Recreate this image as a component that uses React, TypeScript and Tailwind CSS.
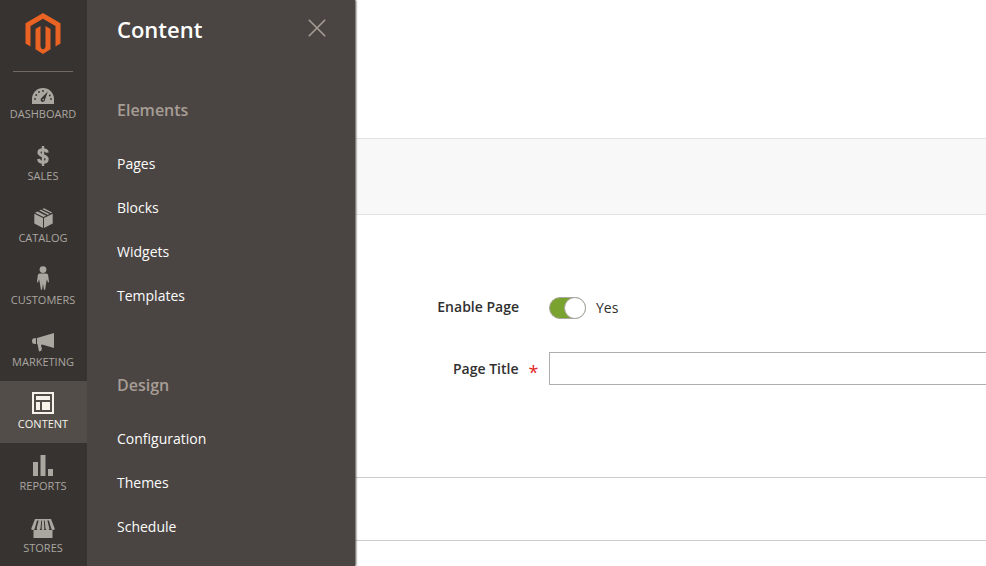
import { useState, type ReactNode } from "react";

type NavItem = { label: string; icon: ReactNode };

const navItems: NavItem[] = [
  {
    label: "Dashboard",
    icon: (
      <svg width="22" height="16" viewBox="0 0 22 16" fill="currentColor">
        <path d="M0 16v-5a11 11 0 0 1 22 0v5z" />
        <g fill="#373330">
          <circle cx="3" cy="11" r="0.9" />
          <circle cx="4.2" cy="7" r="0.9" />
          <circle cx="7" cy="4" r="0.9" />
          <circle cx="11" cy="3" r="0.9" />
          <circle cx="17.8" cy="7.5" r="0.9" />
          <circle cx="19" cy="11" r="0.9" />
          <path d="M15.8 3.6 13 11.6a2.2 2.2 0 1 1-3.3-1.8z" />
        </g>
        <circle cx="11.2" cy="11.6" r="0.8" />
      </svg>
    ),
  },
  {
    label: "Sales",
    icon: (
      <svg width="12" height="20" viewBox="0 0 12 20" fill="none" stroke="currentColor">
        <path d="M10.300 6.600C10 4.600 8.400 3.700 6 3.700 3.500 3.700 1.900 4.800 1.900 6.500c0 4.500 8.300 2 8.300 6.700 0 2-1.700 3.100-4.200 3.100-2.700 0-4.200-1-4.500-3.300" strokeWidth="3" />
        <path d="M6 0v20" strokeWidth="2.400" />
      </svg>
    ),
  },
  {
    label: "Catalog",
    icon: (
      <svg width="19" height="20" viewBox="0 0 19 20" fill="currentColor">
        <path d="M.3 5.800 9 10v10L.3 15.500z" />
        <path d="M10 10l8.700-4.200v9.700L10 20z" />
        <path d="M1 4.700 3.600 3.400 12.200 7.700 9.500 9z" />
        <path d="M5.300 2.500 7 1.700 15.600 6 13.900 6.900z" />
        <path d="M8.300 1 10 .2 18.200 4.600 16.900 5.300z" />
      </svg>
    ),
  },
  {
    label: "Customers",
    icon: (
      <svg width="12" height="24" viewBox="0 0 12 24" fill="currentColor">
        <circle cx="6" cy="3.6" r="3.4" />
        <path d="M3 7.6h6c1.4 0 2 .8 2.2 2l.8 6c.1 1-.9 1.3-1.2.4L9.9 13.2 9 18l-.8 5.3c-.2.9-1.2.9-1.3 0L6 17.8l-.9 5.5c-.1.9-1.1.9-1.3 0L3 18l-.9-4.8-.9 2.8c-.3.9-1.3.6-1.2-.4l.8-6c.2-1.2.8-2 2.2-2z" />
      </svg>
    ),
  },
  {
    label: "Marketing",
    icon: (
      <svg width="22" height="19" viewBox="0 0 22 19" fill="currentColor">
        <path d="M22 0v15L11 11.8 5 11V5z" />
        <path d="M4 5v6l-2.8-.2Q0 10.300 0 8t1.200-2.600z" />
        <path d="M5.500 11h4l-.5 3 1 .8-.7 3-2.300.600z" />
      </svg>
    ),
  },
  {
    label: "Content",
    icon: (
      <svg width="22" height="22" viewBox="0 0 22 22" fill="currentColor">
        <path fillRule="evenodd" d="M0 0h22v22H0zM2 2v18h18V2z" />
        <path d="M4 4h14v4H4zM4 10h4v8H4zM10 10h8v8h-8z" />
      </svg>
    ),
  },
  {
    label: "Reports",
    icon: (
      <svg width="20" height="21" viewBox="0 0 20 21" fill="currentColor">
        <path d="M0 7h5v14H0zM7.500 0h5v21h-5zM15 14h5v7h-5z" />
      </svg>
    ),
  },
  {
    label: "Stores",
    icon: (
      <svg width="24" height="19" viewBox="0 0 24 19" fill="currentColor">
        <path d="M4 0h16v1.500H4zM2.500 11h19v8h-19z" />
        <path d="M4 0h2.500L3.800 9.500Q3.400 11 1.800 11 0 11 .3 9.500zM8 0h2.400l-.9 9.500Q9.300 11.200 7.400 11.200T5.600 9.500zM13.600 0H16l2.400 9.500q.1 1.700-1.800 1.700t-2.100-1.700zM17.500 0H20l3.700 9.500q.3 1.500-1.500 1.500-1.600 0-2-1.500zM11.200 0h1.600l.6 9.500q0 1.700-1.400 1.700t-1.400-1.700z" />
      </svg>
    ),
  },
];

const sections = [
  { title: "Elements", links: ["Pages", "Blocks", "Widgets", "Templates"] },
  { title: "Design", links: ["Configuration", "Themes", "Schedule"] },
];

function SideNav() {
  return (
    <nav aria-label="Main" className="w-[87px] shrink-0 bg-[#373330]">
      <a href="#home" aria-label="Magento admin" className="mr-[14px] ml-[13px] flex h-[72px] justify-center border-b border-[#736963] pt-[13px]">
        <svg width="36" height="41" viewBox="0 0 35 41" fill="#eb6323">
          <path d="M17.500 0 35 10.200v20.300l-5 2.900V13L17.500 5.800 5 13v20.400l-5-2.900V10.200z" />
          <path d="M15 13v20.500q0 2 2.500 3 2.500-1 2.500-3V13l5 2.900v20.400L17.500 41 10 36.300V15.900z" />
        </svg>
      </a>
      <ul className="-mt-px">
        {navItems.map(({ label, icon }) => {
          const active = label === "Content";
          return (
            <li key={label}>
              <a
                href={`#${label}`}
                aria-current={active ? "page" : undefined}
                className={`flex h-[62px] flex-col items-center pr-px text-[11px] leading-4 uppercase ${
                  active ? "bg-[#524d49] text-[#f7f3eb]" : "text-[#aaa6a0]"
                }`}
              >
                <span className="flex h-[35px] items-end justify-center pb-[2px]">{icon}</span>
                {label}
              </a>
            </li>
          );
        })}
      </ul>
    </nav>
  );
}

function SubMenu() {
  return (
    <aside className="z-10 w-[268px] shrink-0 overflow-hidden bg-[#4a4542] px-[30px] shadow-[1px_0_2px_#4a4542]">
      <header className="flex h-[58px] items-center justify-between">
        <h2 className="text-[22px] leading-8 font-semibold text-white">Content</h2>
        <button type="button" aria-label="Close menu" className="-mr-px pb-0.5 text-[#a79d95]">
          <svg width="18" height="18" viewBox="0 0 18 18" fill="none" stroke="currentColor" strokeWidth="1.600">
            <path d="M.8.800l16.400 16.400M17.200.800.8 17.200" />
          </svg>
        </button>
      </header>
      <div className="flex flex-col gap-14 pt-[41px]">
        {sections.map(({ title, links }) => (
          <section key={title}>
            <h3 className="mb-[21px] text-[16px] leading-[22px] font-semibold text-[#a79d95]">{title}</h3>
            <ul>
              {links.map((link) => (
                <li key={link}>
                  <a href={`#${link}`} className="flex h-11 items-center text-[14px] leading-5 text-[#fcfcfc]">
                    {link}
                  </a>
                </li>
              ))}
            </ul>
          </section>
        ))}
      </div>
    </aside>
  );
}

function PageForm() {
  const [enabled, setEnabled] = useState(true);
  const [title, setTitle] = useState("");
  return (
    <main className="min-w-0 flex-1 bg-white text-[14px] leading-5 text-[#303030]">
      <div className="mt-[138px] h-[77px] border-y border-[#e3e3e3] bg-[#f8f8f8]" />
      <form className="flex flex-col gap-[33px] pt-[82px] pb-[92px]">
        <div className="flex items-center">
          <label htmlFor="enable-page" className="w-[164px] pb-0.5 text-right font-semibold">
            Enable Page
          </label>
          <label className="ml-[30px] flex items-center gap-[10px]">
            <input
              id="enable-page"
              type="checkbox"
              role="switch"
              checked={enabled}
              onChange={(e) => setEnabled(e.target.checked)}
              className="peer sr-only"
            />
            <span className="flex h-[22px] w-[37px] items-center rounded-full border border-[#aaa6a0] bg-[#e3e3e3] peer-checked:justify-end peer-checked:bg-[#79a22e]">
              <span className="-mr-px size-[22px] shrink-0 rounded-full border border-[#aaa6a0] bg-white" />
            </span>
            <span>{enabled ? "Yes" : "No"}</span>
          </label>
        </div>
        <div className="flex items-center">
          <label htmlFor="page-title" className="flex w-[194px] pt-1 pl-[98px] font-semibold">
            Page Title
            <span className="ml-[10px] pt-[3px] text-[18px] font-normal text-[#e22626]" aria-hidden="true">
              *
            </span>
          </label>
          <input
            id="page-title"
            type="text"
            required
            value={title}
            onChange={(e) => setTitle(e.target.value)}
            className="h-[33px] min-w-0 flex-1 rounded-l-[1px] border border-r-0 border-[#adadad] bg-white px-[10px] outline-none"
          />
        </div>
      </form>
      <div className="h-16 border-y border-[#cccccc]" />
    </main>
  );
}

export default function App() {
  return (
    <div className="flex h-screen overflow-hidden bg-white font-['Open_Sans','Noto_Sans',sans-serif]">
      <SideNav />
      <SubMenu />
      <PageForm />
    </div>
  );
}
